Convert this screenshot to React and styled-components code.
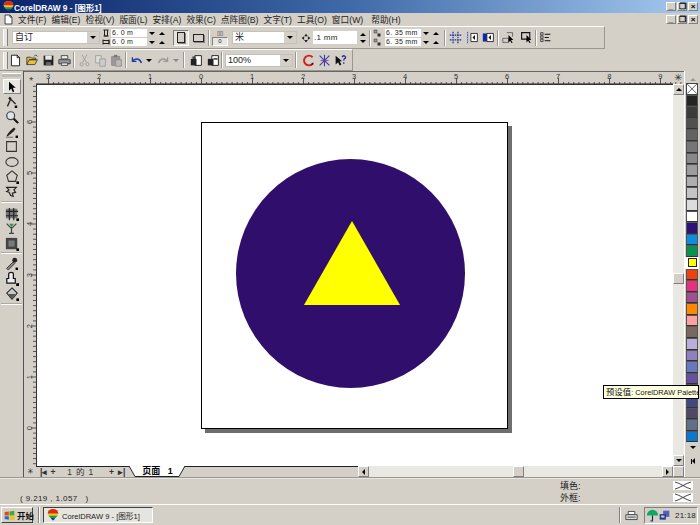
import React from "react";
import styled, { createGlobalStyle, css } from "styled-components";

const GlobalStyle = createGlobalStyle`
  html, body { margin: 0; padding: 0; background: #d4d0c8; }
  * { box-sizing: border-box; }
`;

const raised = css`
  border-top: 1px solid #fff;
  border-left: 1px solid #fff;
  border-right: 1px solid #808080;
  border-bottom: 1px solid #808080;
`;
const sunken = css`
  border-top: 1px solid #808080;
  border-left: 1px solid #808080;
  border-right: 1px solid #fff;
  border-bottom: 1px solid #fff;
`;

const Screen = styled.div`
  position: relative;
  width: 700px;
  height: 525px;
  overflow: hidden;
  display: flex;
  flex-direction: column;
  background: #d4d0c8;
  color: #222;
  font-family: "Liberation Sans", "Noto Sans CJK SC", sans-serif;
  font-size: 9px;
`;

const TitleBar = styled.div`
  height: 13px;
  display: flex;
  align-items: center;
  padding: 0 2px 0 3px;
  background: linear-gradient(90deg, #0a246a 0%, #3f6aa8 50%, #a6caf0 100%);
  color: #fff;
  font-weight: bold;
  font-size: 8.3px;
`;
const TitleText = styled.span`
  margin-left: 0;
  flex: 1;
  white-space: nowrap;
`;
const WinButtons = styled.div`
  display: flex;
  gap: 1px;
  margin-left: auto;
`;
const WinButton = styled.div`
  width: 10px;
  height: 9px;
  background: #d4d0c8;
  ${raised}
  display: flex;
  align-items: center;
  justify-content: center;
  color: #000;
  font-size: 8px;
  font-weight: bold;
  line-height: 1;
`;

const MenuBar = styled.div`
  height: 13px;
  display: flex;
  align-items: center;
  padding: 0 2px 0 3px;
`;
const MenuItem = styled.span`
  font-size: 8.7px;
  white-space: nowrap;
  margin-left: ${(p) => p.$ml ?? 5}px;
`;

const Bar = styled.div`
  height: ${(p) => p.$h}px;
  width: ${(p) => p.$w || 700}px;
  display: flex;
  align-items: center;
  flex-shrink: 0;
  border-top: 1px solid #fff;
  border-bottom: 1px solid #9a978f;
  border-right: 1px solid #9a978f;
`;
const Grip = styled.div`
  width: 5px;
  height: 17px;
  margin-left: 3px;
  margin-right: 1px;
  border-left: 1px solid #fff;
  border-right: 1px solid #808080;
  background: #e8e6e0;
`;
const Sep = styled.div`
  width: 2px;
  height: 16px;
  margin: 0 ${(p) => p.$m ?? 2}px;
  border-left: 1px solid #9a978f;
  border-right: 1px solid #fff;
  flex-shrink: 0;
`;
const SelectBox = styled.div`
  width: ${(p) => p.$w}px;
  height: 13px;
  margin-left: ${(p) => p.$ml || 0}px;
  display: flex;
  flex-shrink: 0;
  background: #fff;
  border: 1px solid #c4c1b9;
`;
const SelectText = styled.span`
  flex: 1;
  font-size: 9px;
  padding-left: 2px;
  line-height: 11px;
`;
const SelectArrow = styled.div`
  width: 12px;
  background: #d4d0c8;
  display: flex;
  align-items: center;
  justify-content: center;
`;
const TriDown = styled.i`
  display: block;
  width: 0;
  height: 0;
  border-left: ${(p) => p.$s || 3}px solid transparent;
  border-right: ${(p) => p.$s || 3}px solid transparent;
  border-top: ${(p) => p.$s || 3}px solid ${(p) => p.$c || "#000"};
  margin-left: ${(p) => p.$ml || 0}px;
`;
const TriUp = styled.i`
  display: block;
  width: 0;
  height: 0;
  border-left: ${(p) => p.$s || 3}px solid transparent;
  border-right: ${(p) => p.$s || 3}px solid transparent;
  border-bottom: ${(p) => p.$s || 3}px solid ${(p) => p.$c || "#000"};
  margin-left: ${(p) => p.$ml || 0}px;
`;
const Stack = styled.div`
  display: flex;
  flex-direction: column;
  gap: 1px;
  flex-shrink: 0;
  margin-left: ${(p) => p.$ml || 0}px;
`;
const NumRow = styled.div`
  display: flex;
  align-items: center;
  height: 8px;
`;
const NumField = styled.div`
  width: ${(p) => p.$w}px;
  height: ${(p) => (p.$tall ? 13 : 8)}px;
  margin-left: ${(p) => p.$ml || 0}px;
  flex-shrink: 0;
  background: #fff;
  font-size: ${(p) => (p.$tall ? 8 : 7)}px;
  line-height: ${(p) => (p.$tall ? 13 : 8)}px;
  padding-left: 1px;
  letter-spacing: 0.3px;
  white-space: nowrap;
`;
const SpinPair = styled.div`
  width: 20px;
  display: flex;
  align-items: center;
  justify-content: space-around;
`;
const ToggleBtn = styled.div`
  width: ${(p) => p.$w || 16}px;
  height: 16px;
  margin-left: ${(p) => p.$ml || 0}px;
  flex-shrink: 0;
  display: flex;
  align-items: center;
  justify-content: center;
  ${(p) => p.$on && css`background: #e8e6e0; ${sunken}`}
`;
const Rect = styled.div`
  width: ${(p) => p.$w}px;
  height: ${(p) => p.$h}px;
  border: 1px solid #222;
  background: #d4d0c8;
  box-shadow: 1px 1px 0 #888;
`;
const PagesBox = styled.div`
  width: 16px;
  height: 17px;
  display: flex;
  flex-direction: column;
  align-items: center;
  flex-shrink: 0;
  font-size: 6px;
  line-height: 8px;
`;
const PagesZero = styled.div`
  width: 16px;
  height: 9px;
  background: #e8e6e0;
  text-align: center;
  ${sunken}
  line-height: 7px;
`;
const Ic = styled.svg`
  display: block;
  width: ${(p) => p.$s || 13}px;
  height: ${(p) => p.$s || 13}px;
  flex-shrink: 0;
  margin-left: ${(p) => p.$ml || 0}px;
`;
const SpinV = styled.div`
  width: 9px;
  height: 17px;
  margin-left: 1px;
  display: flex;
  flex-direction: column;
  gap: 4px;
  align-items: center;
  justify-content: center;
  background: #d4d0c8;
  flex-shrink: 0;
`;

/* icons */
const Icon = ({ s, ml, children }) => (
  <Ic $s={s} $ml={ml} viewBox="0 0 16 16">
    {children}
  </Ic>
);
const Balloon = ({ s = 11, ml }) => (
  <Ic $s={s} $ml={ml} viewBox="0 0 16 16">
    <path d="M1 6a7 6 0 0 1 14 0c0 2-2 4-4 6H5C3 10 1 8 1 6z" fill="#e8c820" />
    <path d="M1 6a7 6 0 0 1 14 0H1z" fill="#e02818" />
    <path d="M2 9h12l-3 3H5z" fill="#1c9a40" />
    <path d="M5 12h6l-2 3H7z" fill="#2038b0" />
  </Ic>
);
const DocIcon = ({ s, ml }) => (
  <Icon s={s} ml={ml}>
    <path d="M3 1.5h7l3 3v10H3z" fill="#fff" stroke="#000" />
    <path d="M10 1.5v3h3" fill="none" stroke="#000" />
  </Icon>
);
const OpenIcon = ({ ml }) => (
  <Icon ml={ml}>
    <path d="M1 13V4h5l1 1h5v2H4l-3 6h10l3-6H4" fill="#e8c040" stroke="#333" />
    <path d="M10 3l2-2 2 2" fill="none" stroke="#333" />
  </Icon>
);
const SaveIcon = ({ ml }) => (
  <Icon ml={ml}>
    <path d="M2 2h12v12H2z" fill="#222" />
    <path d="M4 2h8v5H4z" fill="#e8e8e8" />
    <path d="M5 10h6v4H5z" fill="#666" />
  </Icon>
);
const PrintIcon = ({ ml }) => (
  <Icon ml={ml}>
    <path d="M4 2h8v4H4z" fill="#eee" stroke="#333" />
    <path d="M1 7h14v5H1z" fill="#999" stroke="#333" />
    <path d="M4 11h8v3H4z" fill="#eee" stroke="#333" />
  </Icon>
);
const CutIcon = ({ ml }) => (
  <Icon ml={ml}>
    <path d="M5 1l5 9M11 1L6 10" stroke="#999" fill="none" />
    <circle cx="4.5" cy="12.5" r="2" fill="none" stroke="#999" />
    <circle cx="11.5" cy="12.5" r="2" fill="none" stroke="#999" />
  </Icon>
);
const CopyIcon = ({ ml }) => (
  <Icon ml={ml}>
    <path d="M2 2h7v9H2z" fill="#ddd" stroke="#999" />
    <path d="M7 6h7v9H7z" fill="#ccc" stroke="#999" />
  </Icon>
);
const PasteIcon = ({ ml }) => (
  <Icon ml={ml}>
    <path d="M2 3h10v11H2z" fill="#999" stroke="#888" />
    <path d="M5 1h4v3H5z" fill="#777" />
    <path d="M7 7h7v8H7z" fill="#bbb" stroke="#888" />
  </Icon>
);
const UndoIcon = ({ c = "#1c3aa0", ml, flip }) => (
  <Icon ml={ml}>
    <g transform={flip ? "translate(16 0) scale(-1 1)" : undefined}>
      <path d="M3 4v5h5" fill="none" stroke={c} strokeWidth="1.6" />
      <path d="M3 9c3-4 9-4 11 2" fill="none" stroke={c} strokeWidth="1.8" />
    </g>
  </Icon>
);
const ImportIcon = ({ ml, flip }) => (
  <Icon ml={ml}>
    <path d="M6 2h8v12H6z" fill="#fff" stroke="#000" />
    <path d="M1 6h7v8H1z" fill="#222" />
    <path d={flip ? "M8 5h5v2H8z" : "M3 3h4v3H3z"} fill="#444" />
  </Icon>
);
const CorelMark = ({ ml }) => (
  <Icon ml={ml}>
    <path d="M13 4a6 6 0 1 0 0 8" fill="none" stroke="#d02020" strokeWidth="2.4" />
    <path d="M11 13l3 0 0-3z" fill="#000" />
  </Icon>
);
const WhatIcon = ({ ml }) => (
  <Icon ml={ml}>
    <path d="M2 2v11l3-3 2 4 2-1-2-4h3z" fill="#111" />
    <path d="M10 4c1-3 5-2 4 1-1 1-2 1-2 3M12 10v2" fill="none" stroke="#1c2a90" strokeWidth="1.6" />
  </Icon>
);
const HatIcon = ({ ml }) => (
  <Icon ml={ml}>
    <path d="M2 2l12 12M14 2L2 14M8 1v14" stroke="#2a3ca8" fill="none" strokeWidth="1.3" />
    <path d="M3 8h10" stroke="#b02090" />
  </Icon>
);
const GridIcon = ({ ml }) => (
  <Icon ml={ml}>
    <path d="M5 1v14M11 1v14M1 5h14M1 11h14" stroke="#10209a" strokeWidth="1.4" strokeDasharray="2 1" fill="none" />
  </Icon>
);
const FrameIcon = ({ ml, fill }) => (
  <Icon ml={ml}>
    {fill ? <path d="M1 3h5v10H1z" fill="#1028b0" /> : <path d="M2 1v14" stroke="#1028b0" strokeDasharray="2 1" />}
    <path d="M6 3h8v10H6z" fill="#fff" stroke="#111" />
    <path d="M11 5v6L8 8z" fill="#111" />
  </Icon>
);
const PickIcon = ({ ml, box }) => (
  <Icon ml={ml}>
    {box ? (
      <path d="M2 2h10v8H2z" fill="none" stroke="#111" strokeWidth="1.4" />
    ) : (
      <path d="M1 9h7v5H1zM6 2h7v5" fill="none" stroke="#555" />
    )}
    <path d="M8 5v9l2-2 2 3 1-1-2-3h3z" fill="#000" />
  </Icon>
);
const ListIcon = ({ ml }) => (
  <Icon ml={ml}>
    <path d="M2 2h3v3H2zM2 6h3v3H2zM2 10h3v3H2z" fill="none" stroke="#333" />
    <path d="M7 4h7M7 8h5M7 12h7" stroke="#111" strokeWidth="1.3" />
  </Icon>
);

/* toolbox */
const Main = styled.div`
  display: flex;
  height: 406px;
  flex-shrink: 0;
`;
const Toolbox = styled.div`
  width: 23px;
  flex-shrink: 0;
  display: flex;
  flex-direction: column;
  align-items: center;
  padding-top: 2px;
`;
const ToolGrip = styled.div`
  width: 19px;
  height: 4px;
  margin-bottom: 2px;
  background: #bdbab2;
  border-top: 1px solid #fff;
`;
const ToolBtn = styled.div`
  width: 18px;
  height: ${(p) => p.$h || 15}px;
  flex-shrink: 0;
  display: flex;
  align-items: center;
  justify-content: center;
  ${(p) => p.$on && css`background: #e8e6e0; ${raised}`}
`;
const ToolSep = styled.div`
  width: 21px;
  height: 2px;
  margin: ${(p) => p.$m};
  flex-shrink: 0;
  border-top: 1px solid #aaa;
  border-bottom: 1px solid #fff;
`;

const Center = styled.div`
  width: 661px;
  flex-shrink: 0;
  display: flex;
  flex-direction: column;
  border-left: 1px solid #555;
`;
const TopRuler = styled.div`
  height: 13px;
  flex-shrink: 0;
  border-top: 1px solid #666;
`;
const RulerSvg = styled.svg`
  display: block;
  flex-shrink: 0;
`;
const MidRow = styled.div`
  display: flex;
  height: 382px;
  flex-shrink: 0;
`;
const Canvas = styled.div`
  width: 637px;
  flex-shrink: 0;
  background: #fff;
  border-left: 1px solid #333;
  border-top: 1px solid #333;
  padding: 37px 0 0 164px;
`;
const Page = styled.div`
  width: 307px;
  height: 307px;
  background: #fff;
  border: 1px solid #000;
  box-shadow: 4px 4px 0 #6e6e6e;
`;
const Artwork = styled.svg`
  display: block;
`;
const VScroll = styled.div`
  width: 11px;
  flex-shrink: 0;
  display: flex;
  flex-direction: column;
  background: #e9e8e3;
`;
const ScrollBtn = styled.div`
  width: 11px;
  height: 11px;
  flex-shrink: 0;
  background: #d4d0c8;
  display: flex;
  align-items: center;
  justify-content: center;
  ${raised}
`;
const ScrollGap = styled.div`
  flex: ${(p) => (p.$size ? `0 0 ${p.$size}px` : 1)};
`;
const BottomRow = styled.div`
  height: 11px;
  display: flex;
  flex-shrink: 0;
`;
const RulerCorner = styled.div`
  width: 12px;
  flex-shrink: 0;
  display: flex;
  align-items: center;
  justify-content: center;
  font-size: 8px;
  line-height: 1;
`;
const PageTabs = styled.div`
  width: 322px;
  flex-shrink: 0;
  display: flex;
  align-items: flex-start;
  border-top: 1px solid #222;
  height: 11px;
  font-size: 8.5px;
  color: #333;
`;
const NavGlyph = styled.span`
  margin-left: ${(p) => p.$ml}px;
  font-weight: bold;
  line-height: 10px;
  white-space: nowrap;
`;
const NavCount = styled.span`
  margin-left: ${(p) => p.$ml}px;
  letter-spacing: 0.8px;
  line-height: 10px;
  white-space: nowrap;
`;
const Tab = styled.div`
  display: flex;
  margin-left: 4px;
  margin-top: -1px;
  height: 11px;
`;
const TabBody = styled.div`
  width: 42px;
  background: #fff;
  border-bottom: 1px solid #222;
  font-weight: bold;
  font-size: 9px;
  color: #000;
  line-height: 10px;
  text-align: center;
  white-space: pre;
`;
const HScroll = styled.div`
  flex: 1;
  display: flex;
  background: #e9e8e3;
`;

/* palette */
const PaletteCol = styled.div`
  width: 16px;
  flex-shrink: 0;
  display: flex;
  flex-direction: column;
  align-items: center;
  border-left: 1px solid #fff;
  padding-top: 7px;
`;
const PaletteList = styled.div`
  display: flex;
  flex-direction: column;
  margin-top: 2px;
`;
const Swatch = styled.div`
  width: 12px;
  height: 11.6px;
  background: ${(p) => p.$c};
  border: 1px solid #555;
  border-bottom-color: #333;
`;
const SwatchNone = styled.svg`
  display: block;
  width: 12px;
  height: 11.6px;
  background: #fff;
  border: 1px solid #444;
`;
const SwatchOn = styled.div`
  width: 14px;
  height: 11.6px;
  margin-left: -1px;
  background: #fff;
  display: flex;
  align-items: center;
  justify-content: center;
`;
const SwatchInner = styled.div`
  width: 9px;
  height: 9px;
  background: #ffff00;
  border: 1px solid #222;
`;
const PaletteEnd = styled.div`
  margin-top: 4px;
  display: flex;
  flex-direction: column;
  align-items: center;
  gap: 9px;
`;
const EndGlyph = styled.div`
  display: flex;
  align-items: center;
  gap: 0;
`;
const EndBar = styled.i`
  display: block;
  width: 1px;
  height: 5px;
  background: #000;
`;
const TriLeft = styled.i`
  display: block;
  width: 0;
  height: 0;
  border-top: 3px solid transparent;
  border-bottom: 3px solid transparent;
  border-right: 3px solid #000;
`;
const TriRight = styled.i`
  display: block;
  width: 0;
  height: 0;
  border-top: 3px solid transparent;
  border-bottom: 3px solid transparent;
  border-left: 3px solid #000;
`;

/* status */
const Status = styled.div`
  height: 28px;
  flex-shrink: 0;
  display: flex;
  border-top: 1px solid #9a978f;
  box-shadow: inset 0 1px 0 #e8e6e0;
  border-bottom: 1px solid #fff;
`;
const Coords = styled.div`
  flex: 1;
  padding: 16px 0 0 20px;
  font-size: 8px;
  line-height: 10px;
  letter-spacing: 0.4px;
  white-space: pre;
`;
const FillLabels = styled.div`
  width: 113px;
  padding-top: 3px;
  display: flex;
  flex-direction: column;
  gap: 2px;
  font-size: 9px;
  line-height: 10px;
`;
const FillSwatches = styled.div`
  width: 27px;
  padding-top: 3px;
  display: flex;
  flex-direction: column;
  gap: 3px;
`;
const NoFill = styled.svg`
  display: block;
  width: 20px;
  height: 9px;
  background: #fff;
`;

/* taskbar */
const Taskbar = styled.div`
  flex: 1;
  display: flex;
  align-items: center;
  padding: 1px 2px 1px 1px;
`;
const StartBtn = styled.div`
  width: 32px;
  height: 16px;
  display: flex;
  align-items: center;
  gap: 2px;
  padding-left: 2px;
  font-size: 8.5px;
  font-weight: bold;
  color: #111;
  white-space: nowrap;
  flex-shrink: 0;
  ${raised}
  border-right-color: #404040;
  border-bottom-color: #404040;
`;
const TaskSep = styled.div`
  width: 2px;
  height: 16px;
  margin-left: ${(p) => p.$ml}px;
  border-left: 1px solid #808080;
  border-right: 1px solid #fff;
  flex-shrink: 0;
`;
const TaskBtn = styled.div`
  width: 110px;
  height: 16px;
  margin-left: 3px;
  display: flex;
  align-items: center;
  gap: 3px;
  padding-left: 3px;
  font-size: 7.6px;
  white-space: nowrap;
  flex-shrink: 0;
  background: #e6e4de;
  border-top: 1px solid #404040;
  border-left: 1px solid #404040;
  border-right: 1px solid #fff;
  border-bottom: 1px solid #fff;
`;
const Tray = styled.div`
  width: 54px;
  height: 17px;
  margin-left: 6px;
  display: flex;
  align-items: center;
  padding-left: 1px;
  flex-shrink: 0;
  font-size: 8px;
  letter-spacing: 0.2px;
  ${sunken}
`;
const Clock = styled.span`
  margin-left: 5px;
`;
const Spacer = styled.div`
  flex: 1;
`;
const Tooltip = styled.div`
  position: absolute;
  left: 603px;
  top: 385px;
  width: 96px;
  height: 14px;
  background: #ffffe1;
  border: 1px solid #000;
  font-size: 7.4px;
  line-height: 12px;
  padding-left: 2px;
  white-space: nowrap;
  overflow: hidden;
  color: #111;
`;
const TipCjk = styled.span`
  font-size: 8.4px;
`;

const menus = [
  ["文件(F)", 4],
  ["编辑(E)", 5],
  ["检视(V)", 5],
  ["版面(L)", 5],
  ["安排(A)", 5],
  ["效果(C)", 5],
  ["点阵图(B)", 5],
  ["文字(T)", 5],
  ["工具(O)", 5],
  ["窗口(W)", 5],
  ["帮助(H)", 8],
];

const swatches = [
  null, "#242422", "#3c3c3a", "#50504e", "#626262", "#767678", "#88888c", "#9c9c9e", "#aeaeb0",
  "#c4c4c6", "#dcdce0", "#ffffff", "#2f1278", "#0a8ee0", "#0a9050", "yellow", "#f04010", "#e83080",
  "#a05090", "#ff8800", "#ffa0a0", "#786860", "#b8b0d8", "#9080c0", "#6878c0", "#6850a0", "#5a4a98",
  "#404880", "#504868", "#607088", "#0a78d0",
];

const TopRulerDrawing = () => {
  const ticks = [];
  const labels = ["3", "2", "1", "0", "1", "2", "3", "4", "5", "6", "7", "8", "9"];
  for (let i = 0; i < 128; i++) {
    const x = 24.5 + i * 5.1;
    const major = i % 10 === 0;
    ticks.push(<line key={i} x1={x} x2={x} y1={major ? 6 : 10} y2={12} stroke="#333" strokeWidth="0.8" />);
  }
  return (
    <RulerSvg width="660" height="12" viewBox="0 0 660 12">
      <line x1="12" x2="649" y1="11.5" y2="11.5" stroke="#777" />
      {ticks}
      {labels.map((l, i) => (
        <text key={i} x={24 + i * 51.02} y="7" fontSize="7.5" textAnchor="middle" fontFamily="Liberation Sans" fill="#333">
          {l}
        </text>
      ))}
      <text x="7" y="7" fontSize="8" textAnchor="middle" fill="#333" fontFamily="Liberation Sans">⁎</text>
      <text x="654" y="9" fontSize="10" textAnchor="middle" fill="#333" fontFamily="Liberation Sans">✳</text>
    </RulerSvg>
  );
};

const LeftRulerDrawing = () => {
  const ticks = [];
  const labels = ["6", "5", "4", "3", "2", "1", "0"];
  for (let i = -7; i < 68; i++) {
    const y = 38 + i * 5.1;
    const major = i % 10 === 0;
    if (y < 0) continue;
    ticks.push(<line key={i} x1={major ? 7 : 9} x2={12} y1={y} y2={y} stroke="#333" strokeWidth="0.8" />);
  }
  return (
    <RulerSvg width="12" height="382" viewBox="0 0 12 382">
      {ticks}
      {labels.map((l, i) => (
        <text
          key={i}
          transform={`translate(8 ${38 + i * 51.02}) rotate(-90)`}
          fontSize="7.5"
          textAnchor="middle"
          fontFamily="Liberation Sans"
          fill="#333"
        >
          {l}
        </text>
      ))}
    </RulerSvg>
  );
};

const Tools = [
  <Icon s={12}><path d="M4 1v12l3-3 2 5 2-1-2-5h4z" fill="#000" /></Icon>,
  <Icon s={13}><path d="M3 14l4-9 6 6" fill="none" stroke="#222" strokeWidth="1.6" /><path d="M6 2l2 2-2 2-2-2z" fill="#111" /><path d="M12 13h3v3h-3z" fill="#000" /></Icon>,
  <Icon s={14}><circle cx="6.5" cy="6.5" r="4.5" fill="#dfe6ea" stroke="#444" strokeWidth="1.4" /><path d="M10 10l5 5" stroke="#111" strokeWidth="2.4" /></Icon>,
  <Icon s={13}><path d="M2 13c2-3 4-6 9-10l2 2c-4 5-7 7-10 9z" fill="#222" /><path d="M1 15h9" stroke="#555" /><path d="M13 13h3v3h-3z" fill="#000" /></Icon>,
  <Icon s={13}><path d="M2 2h12v12H2z" fill="none" stroke="#333" strokeWidth="1.3" /></Icon>,
  <Icon s={14}><ellipse cx="8" cy="8" rx="7" ry="5" fill="none" stroke="#333" strokeWidth="1.2" /></Icon>,
  <Icon s={14}><path d="M8 1l6 5-2 7H4L2 6z" fill="none" stroke="#333" strokeWidth="1.2" /><path d="M13 13h3v3h-3z" fill="#000" /></Icon>,
  <Icon s={13}><path d="M2 3h12l-3 3 2 3-4 1 1 4-3-1-2-4-3-1 3-2z" fill="none" stroke="#222" strokeWidth="1.4" /></Icon>,
  "2px 0 3px",
  <Icon s={14}><path d="M1 2h13v11H1z" fill="#777" /><path d="M5 1v14M10 1v14M1 5h14M1 10h14" stroke="#222" strokeWidth="1.3" /><path d="M13 13h3v3h-3z" fill="#000" /></Icon>,
  <Icon s={13}><path d="M2 2l5 5h2l5-5M8 7v7M5 14h6" fill="none" stroke="#444" strokeWidth="1.5" /><path d="M5 2h6l-3 4z" fill="#2a9a50" /></Icon>,
  <Icon s={14}><path d="M1 1h13v13H1z" fill="#444" /><path d="M4 4h7v7H4z" fill="#7a7a7a" /><path d="M13 13h3v3h-3z" fill="#000" /></Icon>,
  "1px 0 2px",
  <Icon s={13}><path d="M2 14l8-8 2 2-8 8z" fill="#888" stroke="#222" /><circle cx="12" cy="4" r="3" fill="#222" /><path d="M13 13h3v3h-3z" fill="#000" /></Icon>,
  <Icon s={15}><path d="M5 3c0-2 5-2 5 0v5h2v5H3V8h2z" fill="#eee" stroke="#111" strokeWidth="1.3" /><path d="M13 13h3v3h-3z" fill="#000" /></Icon>,
  <Icon s={14}><path d="M8 1l6 6-6 7-6-7z" fill="#c8c8c8" stroke="#222" strokeWidth="1.2" /><path d="M3 8h9l-4 5z" fill="#555" /><path d="M13 13h3v3h-3z" fill="#000" /></Icon>,
  "2px 0 0",
];

const CloseButtons = () => (
  <WinButtons>
    <WinButton>_</WinButton>
    <WinButton>❐</WinButton>
    <WinButton>×</WinButton>
  </WinButtons>
);

const NoFillMark = () => (
  <NoFill viewBox="0 0 20 9">
    <path d="M2 1c5 1 11 6 16 7M18 1C13 2 7 7 2 8" stroke="#333" fill="none" strokeWidth="0.9" />
  </NoFill>
);

const Spin = () => (
  <SpinPair>
    <TriDown $s={3.5} />
    <TriUp $s={3.5} />
  </SpinPair>
);

export default function App() {
  return (
    <Screen>
      <GlobalStyle />
      <TitleBar>
        <Balloon />
        <TitleText>CorelDRAW 9 - [图形1]</TitleText>
        <CloseButtons />
      </TitleBar>
      <MenuBar>
        <DocIcon s={11} />
        {menus.map(([m, ml]) => (
          <MenuItem key={m} $ml={ml}>{m}</MenuItem>
        ))}
        <CloseButtons />
      </MenuBar>

      <Bar $h={23} $w={605}>
        <Grip />
        <SelectBox $w={88} $ml={3}>
          <SelectText>自订</SelectText>
          <SelectArrow><TriDown /></SelectArrow>
        </SelectBox>
        <Stack $ml={2}>
          <Icon s={8}><path d="M3 2h10M3 14h10M5 2v12h6V2" fill="none" stroke="#222" strokeWidth="2" /></Icon>
          <Icon s={8}><path d="M2 3v10M14 3v10M2 5h12v6H2" fill="none" stroke="#222" strokeWidth="2" /></Icon>
        </Stack>
        <Stack $ml={1}>
          <NumRow><NumField $w={36}>6. 0 m</NumField><Spin /></NumRow>
          <NumRow><NumField $w={36}>6. 0 m</NumField><Spin /></NumRow>
        </Stack>
        <ToggleBtn $on $ml={6}><Rect $w={8} $h={11} /></ToggleBtn>
        <ToggleBtn $ml={2} $w={15}><Rect $w={11} $h={8} /></ToggleBtn>
        <Sep $m={2} />
        <PagesBox>
          <span>▯▯</span>
          <PagesZero>0</PagesZero>
        </PagesBox>
        <SelectBox $w={65} $ml={4}>
          <SelectText>米</SelectText>
          <SelectArrow><TriDown /></SelectArrow>
        </SelectBox>
        <Icon s={10} ml={4}><path d="M8 1l3 4H5zM8 15l3-4H5zM1 8l4-3v6zM15 8l-4-3v6z" fill="#222" /></Icon>
        <NumField $w={44} $tall $ml={2}>.1 mm</NumField>
        <SpinV><TriUp $s={3.5} /><TriDown $s={3.5} /></SpinV>
        <Sep $m={2} />
        <Stack>
          <Icon s={8}><path d="M2 2h6v6H2z" fill="#999" stroke="#333" /><path d="M9 9h6v6H9z" fill="#333" /></Icon>
          <Icon s={8}><path d="M2 2h6v6H2z" fill="#999" stroke="#333" /><path d="M9 9h6v6H9z" fill="#333" /></Icon>
        </Stack>
        <Stack $ml={4}>
          <NumRow><NumField $w={36}>6. 35 mm</NumField><Spin /></NumRow>
          <NumRow><NumField $w={36}>6. 35 mm</NumField><Spin /></NumRow>
        </Stack>
        <Sep $m={3} />
        <GridIcon />
        <FrameIcon ml={4} />
        <FrameIcon ml={3} fill />
        <Sep $m={2} />
        <PickIcon ml={1} />
        <PickIcon ml={5} box />
        <Sep $m={2} />
        <ListIcon />
      </Bar>

      <Bar $h={22} $w={353}>
        <Grip />
        <DocIcon />
        <OpenIcon ml={4} />
        <SaveIcon ml={3} />
        <PrintIcon ml={3} />
        <Sep $m={2} />
        <CutIcon ml={1} />
        <CopyIcon ml={3} />
        <PasteIcon ml={3} />
        <Sep $m={2} />
        <UndoIcon ml={1} />
        <TriDown $ml={3} />
        <UndoIcon c="#999" flip ml={5} />
        <TriDown $ml={3} $c="#888" />
        <Sep $m={4} />
        <ImportIcon ml={1} />
        <ImportIcon ml={4} flip />
        <Sep $m={1} />
        <SelectBox $w={68} $ml={1}>
          <SelectText>100%</SelectText>
          <SelectArrow><TriDown /></SelectArrow>
        </SelectBox>
        <Sep $m={2} />
        <CorelMark ml={3} />
        <HatIcon ml={3} />
        <WhatIcon ml={3} />
      </Bar>

      <Main>
        <Toolbox>
          <ToolGrip />
          {Tools.map((t, i) =>
            typeof t === "string" ? (
              <ToolSep key={i} $m={t} />
            ) : (
              <ToolBtn key={i} $on={i === 0}>{t}</ToolBtn>
            )
          )}
        </Toolbox>
        <Center>
          <TopRuler><TopRulerDrawing /></TopRuler>
          <MidRow>
            <LeftRulerDrawing />
            <Canvas>
              <Page>
                <Artwork width="305" height="305" viewBox="0 0 305 305">
                  <circle cx="148.5" cy="150.5" r="114.5" fill="#2f0f6b" />
                  <path d="M150 98L102 182H198Z" fill="#ffff00" />
                </Artwork>
              </Page>
            </Canvas>
            <VScroll>
              <ScrollBtn><TriUp /></ScrollBtn>
              <ScrollGap $size={178} />
              <ScrollBtn />
              <ScrollGap />
              <ScrollBtn><TriDown /></ScrollBtn>
            </VScroll>
          </MidRow>
          <BottomRow>
            <RulerCorner>✳</RulerCorner>
            <PageTabs>
              <NavGlyph $ml={4}>|◂</NavGlyph>
              <NavGlyph $ml={3}>+</NavGlyph>
              <NavCount $ml={12}>1 的 1</NavCount>
              <NavGlyph $ml={15}>+</NavGlyph>
              <NavGlyph $ml={4}>▸|</NavGlyph>
              <Tab>
                <svg width="7" height="11" viewBox="0 0 7 11"><path d="M0 0L6 10.5H7V0Z" fill="#fff" /><path d="M0 0L6 10.5H7" fill="none" stroke="#222" /></svg>
                <TabBody>页面   1</TabBody>
                <svg width="7" height="11" viewBox="0 0 7 11"><path d="M7 0L1 10.5H0V0Z" fill="#fff" /><path d="M7 0L1 10.5H0" fill="none" stroke="#222" /></svg>
              </Tab>
            </PageTabs>
            <HScroll>
              <ScrollBtn><TriLeft /></ScrollBtn>
              <ScrollGap $size={144} />
              <ScrollBtn />
              <ScrollGap />
              <ScrollBtn><TriRight /></ScrollBtn>
              <ScrollBtn />
            </HScroll>
          </BottomRow>
        </Center>
        <PaletteCol>
          <TriUp $c="#999" />
          <PaletteList>
            {swatches.map((c, i) =>
              c === null ? (
                <SwatchNone key={i} viewBox="0 0 12 12">
                  <path d="M0 0L12 12M12 0L0 12" stroke="#333" strokeWidth="1" />
                </SwatchNone>
              ) : c === "yellow" ? (
                <SwatchOn key={i}><SwatchInner /></SwatchOn>
              ) : (
                <Swatch key={i} $c={c} />
              )
            )}
          </PaletteList>
          <PaletteEnd>
            <TriDown />
            <EndGlyph><EndBar /><TriLeft /></EndGlyph>
          </PaletteEnd>
        </PaletteCol>
      </Main>

      <Status>
        <Coords>( 9.219 , 1.057   )</Coords>
        <FillLabels>
          <span>填色:</span>
          <span>外框:</span>
        </FillLabels>
        <FillSwatches>
          <NoFillMark />
          <NoFillMark />
        </FillSwatches>
      </Status>

      <Taskbar>
        <StartBtn>
          <Icon s={11}>
            <path d="M1 3l6-1v6H1z" fill="#e04818" />
            <path d="M8 2l7-1v7H8z" fill="#48a828" />
            <path d="M1 9h6v5l-6-1z" fill="#2068d8" />
            <path d="M8 9h7v6l-7-1z" fill="#f0c018" />
          </Icon>
          开始
        </StartBtn>
        <TaskSep $ml={5} />
        <TaskBtn>
          <Balloon s={12} />
          CorelDRAW 9 - [图形1]
        </TaskBtn>
        <Spacer />
        <TaskSep $ml={0} />
        <Icon s={13} ml={4}>
          <path d="M4 3h8v4H4z" fill="#fff" stroke="#333" />
          <path d="M1 7h14v6H1z" fill="#ddd" stroke="#333" />
          <path d="M3 10h10" stroke="#333" />
        </Icon>
        <Tray>
          <Icon s={13}>
            <path d="M1 8a7 7 0 0 1 14 0z" fill="#10a860" />
            <path d="M8 8v6c0 1-2 1-2 0" fill="none" stroke="#125" strokeWidth="1.4" />
          </Icon>
          <Icon s={11}>
            <path d="M6 1h9v9H6z" fill="#5060b8" />
            <path d="M1 6h9v8H1z" fill="#283880" />
            <path d="M3 8h5v3H3z" fill="#c0c8f0" />
          </Icon>
          <Clock>21:18</Clock>
        </Tray>
      </Taskbar>

      <Tooltip><TipCjk>预设值</TipCjk>: CorelDRAW Palette</Tooltip>
    </Screen>
  );
}
